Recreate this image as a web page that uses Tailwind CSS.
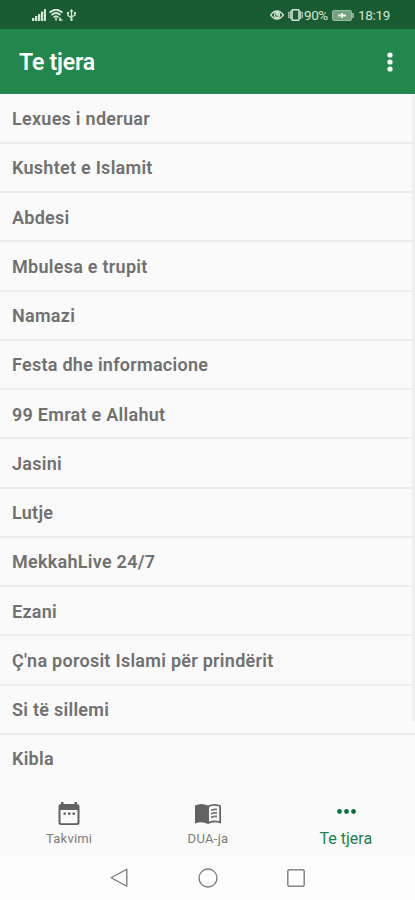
<!DOCTYPE html>
<html lang="sq">
<head>
<meta charset="utf-8">
<meta name="viewport" content="width=device-width, initial-scale=1">
<title>Te tjera</title>
<script src="https://cdn.jsdelivr.net/npm/@tailwindcss/browser@4"></script>
</head>
<body class="overflow-hidden bg-[#fafafa] font-['Roboto',sans-serif]">
<div class="relative flex h-[900px] w-[415px] flex-col overflow-hidden">
  <div class="flex h-[29px] shrink-0 items-center justify-between bg-[#195c33] pl-8 pr-[25px] pt-px text-[#d5e5d6]">
    <div class="flex items-center gap-[3px]">
      <svg class="h-3 w-[14px]" viewBox="0 0 14 12" fill="currentColor"><path d="M0 9h2.300v3H0zM3 7h2.300v5H3zM6 5h2.300v7H6zM9 2.500h2.300v9.500H9zM12 0h2v12h-2z"/></svg>
      <svg class="h-3 w-[14px]" viewBox="0 0 14 12" fill="none" stroke="currentColor" stroke-width="1.700"><path d="M.5 3.500Q7-2 13.500 3.500M2.500 6Q7 2 11.500 6M4.500 8.500Q7 6 9.500 8.500"/><path d="M7 9v2.500M10 11h3.500M11 8.500v3" stroke-width="1.600"/></svg>
      <svg class="ml-px h-3 w-[9px]" viewBox="0 0 9 12" fill="none" stroke="currentColor" stroke-width="1.400"><path d="M4.500 1v10M1 4v2.500L4.500 9M8 4v2L4.500 8"/><path d="M4.500 0 6.500 2.500h-4zM0 3h2v2H0zM7 3h2v2H7zM3.500 9.500h2v2.500h-2z" fill="currentColor" stroke="none"/></svg>
    </div>
    <div class="flex items-center">
      <svg class="h-[10px] w-[14px]" viewBox="0 0 14 10" fill="none" stroke="currentColor" stroke-width="1.300"><path d="M.6 5Q7-3 13.400 5 7 13 .6 5z"/><circle cx="7" cy="5" r="2.500"/><circle cx="7.500" cy="4.500" r=".8" fill="currentColor"/></svg>
      <svg class="ml-[4px] h-3 w-[15px]" viewBox="0 0 15 12" fill="none" stroke="currentColor"><rect x="4" y=".7" width="7" height="10.600" rx="1" stroke-width="1.600"/><path d="M.8 3v6M2.300 2v8M12.700 2v8M14.200 3v6" stroke-width="1"/></svg>
      <span class="ml-px w-[25px] text-[13.500px] leading-4 tracking-[-0.400px]">90%</span>
      <svg class="ml-[3px] h-[11px] w-[22px]" viewBox="0 0 22 11"><rect x=".5" y=".5" width="19" height="10" rx="1.500" fill="#71a180" stroke="#98bba2"/><path d="M6 5.500h8M10 3v5" stroke="#edf5ed" stroke-width="1.800"/><path d="M21 3v5" stroke="#a5c5ae" stroke-width="1.500"/></svg>
      <span class="ml-[4px] w-[32px] whitespace-nowrap text-[13.500px] leading-4 tracking-[-0.300px]">18:19</span>
    </div>
  </div>
  <header class="flex h-[65px] shrink-0 items-center justify-between bg-[#22874d] pl-[19px] pr-[22px] text-white">
    <h1 class="pt-[2px] text-[23px] font-semibold leading-7 tracking-[-0.200px]">Te tjera</h1>
    <svg class="h-5 w-[6px]" viewBox="0 0 6 20" fill="currentColor"><circle cx="3" cy="3" r="2.600"/><circle cx="3" cy="10" r="2.600"/><circle cx="3" cy="17" r="2.600"/></svg>
  </header>
  <main class="h-[691px] shrink-0 overflow-hidden pt-[0.500px] text-[18px] font-semibold tracking-[0.270px] text-[#707070] [&>div]:flex [&>div]:h-[49.250px] [&>div]:items-center [&>div]:border-b-2 [&>div]:border-[#ececec] [&>div]:pl-3 [&>div]:pt-px [&>div:last-child]:border-transparent">
    <div>Lexues i nderuar</div>
    <div>Kushtet e Islamit</div>
    <div>Abdesi</div>
    <div>Mbulesa e trupit</div>
    <div>Namazi</div>
    <div>Festa dhe informacione</div>
    <div>99 Emrat e Allahut</div>
    <div>Jasini</div>
    <div>Lutje</div>
    <div>MekkahLive 24/7</div>
    <div>Ezani</div>
    <div>Ç'na porosit Islami për prindërit</div>
    <div>Si të sillemi</div>
    <div>Kibla</div>
  </main>
  <nav class="grid h-[70px] shrink-0 grid-cols-3 text-[#7c7c7c]">
    <div class="flex flex-col items-center pt-[17px]">
      <svg class="h-[23px] w-[22px]" viewBox="0 0 22 23" fill="#626262"><path fill-rule="evenodd" d="M3 0h2.500v2h11V0H19v2q2.500 0 2.500 2.500v16Q21.500 23 19 23H3Q.5 23 .5 20.500v-16Q.5 2 3 2zM2.500 8v12q0 1.200 1.200 1.200h14.600q1.200 0 1.200-1.200V8z"/><path d="M5.500 10.500H8v2.300H5.500zM10 10.500h2.500v2.300H10zM14.500 10.500H17v2.300h-2.500z"/></svg>
      <span class="mt-[6px] text-[13px] leading-4 tracking-[0.200px]">Takvimi</span>
    </div>
    <div class="flex flex-col items-center pt-[19px]">
      <svg class="ml-px h-5 w-[26px]" viewBox="0 0 26 20" fill="none"><path fill="#626262" d="M0 1.500Q6-1.500 13 1.500 20-1.500 26 1.500v18Q19 17 13 20 7 17 0 19.500z"/><path fill="#fafafa" d="M14 3Q19 .8 24.300 2.500v14.700Q19 15.500 14 17.700z"/><path stroke="#777" stroke-width="1.800" d="M16 6.500q3-1.500 6-1M16 10q3-1.500 6-1M16 13.500q3-1.500 6-1"/></svg>
      <span class="ml-px mt-[7px] text-[13px] leading-4 tracking-[0.300px]">DUA-ja</span>
    </div>
    <div class="flex flex-col items-center pt-[24px] text-[#22804c]">
      <svg class="ml-px h-[5px] w-[19px]" viewBox="0 0 19 5" fill="#08703c"><circle cx="2.500" cy="2.500" r="2.400"/><circle cx="9.500" cy="2.500" r="2.400"/><circle cx="16.500" cy="2.500" r="2.400"/></svg>
      <span class="mt-[15px] text-[16px] leading-5">Te tjera</span>
    </div>
  </nav>
  <footer class="flex h-[45px] shrink-0 items-center bg-[#fdfdfd] pl-[110px]">
    <svg class="h-5 w-[18px]" viewBox="0 0 18 20" fill="none" stroke="#777" stroke-width="1.300" stroke-linejoin="round"><path d="M16.800 1.200v17L1.200 9.700z"/></svg>
    <svg class="ml-[70px] h-5 w-5" viewBox="0 0 20 20" fill="none" stroke="#777" stroke-width="1.300"><circle cx="10" cy="10" r="9"/></svg>
    <svg class="ml-[69px] h-[18px] w-[18px]" viewBox="0 0 18 18" fill="none" stroke="#858585" stroke-width="1.500"><rect x=".8" y=".8" width="16.400" height="16.400" rx="1.500"/></svg>
  </footer>
  <div class="absolute right-0 top-[94px] h-[627px] w-[3px] bg-[#f0f0f0]"></div>
</div>
</body>
</html>
